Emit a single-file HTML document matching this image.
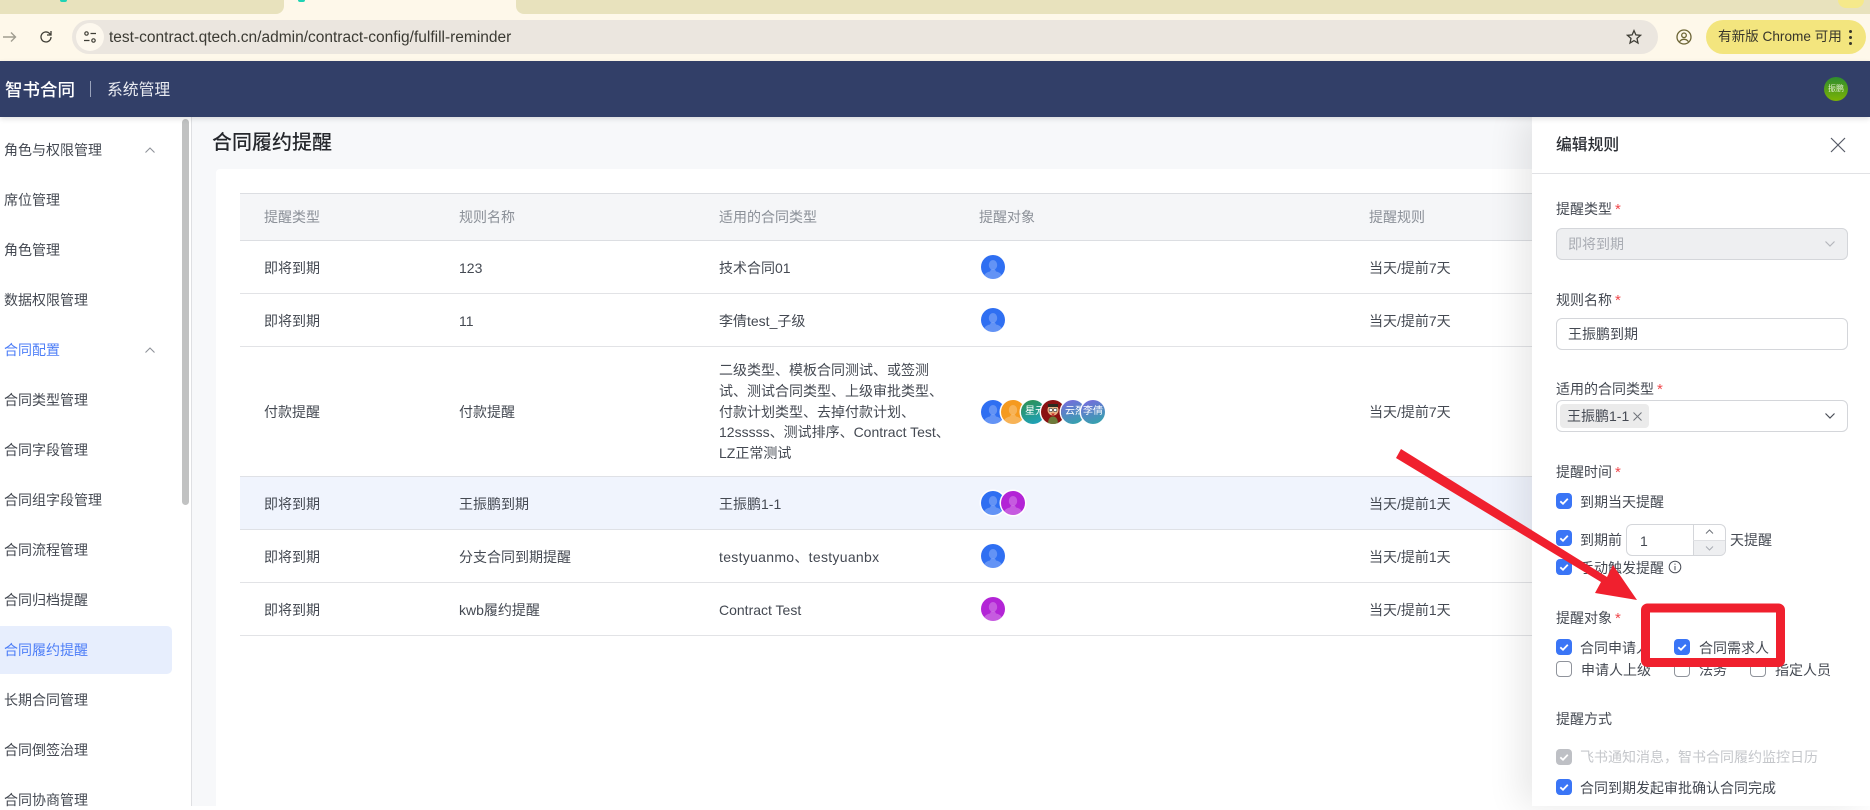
<!DOCTYPE html>
<html lang="zh"><head><meta charset="utf-8"><title>合同履约提醒</title>
<style>
*{box-sizing:border-box}
html,body{margin:0;padding:0}
body{position:relative;width:1870px;height:806px;overflow:hidden;background:#fff;font-family:"Liberation Sans","Noto Sans CJK SC",sans-serif;font-size:14px;color:#40454f}
.a{position:absolute}
.t{position:absolute;line-height:20px;height:20px;white-space:nowrap}
.m{color:#444952}
.h{color:#8b9098}
.red{color:#f0484c;font-size:15px;margin-left:3px}
.cb{position:absolute;width:16px;height:16px;border-radius:4px;background:#3a75f6}
.cb svg{position:absolute;left:0;top:0}
.cb.off{background:#fff;border:1px solid #8f939b}
.cb.dis{background:#bec0c5}
.av{position:absolute;width:24px;height:24px;border-radius:50%;overflow:hidden;box-shadow:0 0 0 1.5px #fff;color:#fff;font-size:11px;line-height:24px;text-align:center}
.av svg{position:absolute;left:0;top:0}
.line{position:absolute;left:240px;width:1292px;height:1px;background:#e2e3e6}
.p .t{margin-top:1px}
</style></head><body>

<!-- browser chrome -->
<div class="a" style="left:0;top:0;width:1870px;height:61px;background:#fef8ea"></div>
<div class="a" style="left:0;top:0;width:284px;height:14px;background:#e8e2bd;border-bottom-right-radius:8px"></div>
<div class="a" style="left:516px;top:0;width:1354px;height:14px;background:#e8e2bd;border-bottom-left-radius:8px"></div>
<div class="a" style="left:60px;top:0;width:7px;height:2px;background:#1fd3b5;border-radius:0 0 4px 4px"></div>
<div class="a" style="left:298px;top:0;width:7px;height:2px;background:#1fd3b5;border-radius:0 0 4px 4px"></div>
<div class="a" style="left:1838px;top:0;width:26px;height:8px;background:#f5e98b;border-radius:0 0 8px 8px"></div>
<svg class="a" style="left:2px;top:29px" width="16" height="16" viewBox="0 0 16 16" fill="none" stroke="#a09d90" stroke-width="1.4"><path d="M1 8h12M9 3.500 13.500 8 9 12.500"/></svg>
<svg class="a" style="left:38px;top:29px" width="16" height="16" viewBox="0 0 16 16" fill="none" stroke="#3f3e36" stroke-width="1.300"><path d="M13 8a5 5 0 1 1-1.600-3.700L13 6"/><path d="M13 2v4H9" /></svg>
<div class="a" style="left:72px;top:20px;width:1586px;height:34px;border-radius:17px;background:#ebe6df"></div>
<div class="a" style="left:76px;top:23px;width:28px;height:28px;border-radius:14px;background:#fdf8ee"></div>
<svg class="a" style="left:83px;top:30px" width="14" height="14" viewBox="0 0 14 14" fill="none" stroke="#3f3e36" stroke-width="1.200"><circle cx="3.500" cy="3.500" r="1.700"/><path d="M7.500 3.500H13M1 10.500h5.500"/><circle cx="10.500" cy="10.500" r="1.700"/></svg>
<div class="t" style="left:109px;top:28px;color:#3b3a33;font-size:15.500px">test-contract.qtech.cn/admin/contract-config/fulfill-reminder</div>
<svg class="a" style="left:1626px;top:29px" width="16" height="16" viewBox="0 0 16 16" fill="none" stroke="#3f3e36" stroke-width="1.300"><path d="M8 1.600 9.900 5.900 14.500 6.300 11 9.400 12 14 8 11.600 4 14 5 9.400 1.500 6.300 6.100 5.900Z"/></svg>
<svg class="a" style="left:1676px;top:29px" width="16" height="16" viewBox="0 0 16 16" fill="none" stroke="#6b6434" stroke-width="1.300"><circle cx="8" cy="8" r="7"/><circle cx="8" cy="6.300" r="2.300"/><path d="M3.600 12.600c1.200-1.700 2.700-2.300 4.400-2.300s3.200.6 4.400 2.300"/></svg>
<div class="a" style="left:1706px;top:20px;width:160px;height:34px;border-radius:17px;background:#f3e57e"></div>
<div class="t" style="left:1718px;top:27px;color:#37352a;font-size:13.600px">有新版 Chrome 可用</div>
<div class="a" style="left:1848.500px;top:30px;width:3px;height:3px;border-radius:50%;background:#37352a;box-shadow:0 6px 0 #37352a,0 12px 0 #37352a"></div>

<!-- app header -->
<div class="a" style="left:0;top:61px;width:1870px;height:56px;background:#323f68;box-shadow:0 2px 5px rgba(0,0,0,.12);z-index:6"></div>
<div class="t" style="left:5px;top:80px;color:#fff;font-size:17.500px;font-weight:500;z-index:7">智书合同</div>
<div class="a" style="left:90px;top:81px;width:1px;height:16px;background:#9aa3bb;z-index:7"></div>
<div class="t" style="left:107px;top:81px;color:#e9ebf1;font-size:15.800px;z-index:7">系统管理</div>
<div class="a" style="left:1824px;top:77px;width:24px;height:24px;border-radius:50%;background:linear-gradient(180deg,#2e8c2e,#7cb304);color:#dfeccf;font-size:8px;line-height:24px;text-align:center;z-index:7">振鹏</div>

<!-- sidebar -->
<div class="a" style="left:0;top:117px;width:192px;height:689px;background:#fff;border-right:1px solid #dfe0e3"></div>
<div class="a" style="left:182px;top:119px;width:7px;height:386px;border-radius:4px;background:#c1c2c2"></div>
<div class="a" style="left:0;top:626px;width:172px;height:48px;border-radius:0 5px 5px 0;background:#e7eefd"></div>
<div class="t m" style="left:4px;top:140px">角色与权限管理</div>
<svg class="a" style="left:144px;top:146px" width="12" height="8" viewBox="0 0 12 8" fill="none" stroke="#8e9299" stroke-width="1.100"><path d="M1.500 6.500 6 2l4.500 4.500"/></svg>
<div class="t m" style="left:4px;top:190px">席位管理</div>
<div class="t m" style="left:4px;top:240px">角色管理</div>
<div class="t m" style="left:4px;top:290px">数据权限管理</div>
<div class="t" style="left:4px;top:340px;color:#4d7ef7">合同配置</div>
<svg class="a" style="left:144px;top:346px" width="12" height="8" viewBox="0 0 12 8" fill="none" stroke="#8e9299" stroke-width="1.100"><path d="M1.500 6.500 6 2l4.500 4.500"/></svg>
<div class="t m" style="left:4px;top:390px">合同类型管理</div>
<div class="t m" style="left:4px;top:440px">合同字段管理</div>
<div class="t m" style="left:4px;top:490px">合同组字段管理</div>
<div class="t m" style="left:4px;top:540px">合同流程管理</div>
<div class="t m" style="left:4px;top:590px">合同归档提醒</div>
<div class="t" style="left:4px;top:640px;color:#4d7ef7">合同履约提醒</div>
<div class="t m" style="left:4px;top:690px">长期合同管理</div>
<div class="t m" style="left:4px;top:740px">合同倒签治理</div>
<div class="t m" style="left:4px;top:790px">合同协商管理</div>

<!-- main -->
<div class="a" style="left:192px;top:117px;width:1340px;height:689px;background:#f7f8fa"></div>
<div class="t" style="left:212px;top:133px;font-size:20px;font-weight:500;color:#26282d">合同履约提醒</div>
<div class="a" style="left:216px;top:169px;width:1316px;height:637px;background:#fff;border-radius:4px 0 0 0"></div>

<!-- table -->
<div class="a" style="left:240px;top:193px;width:1292px;height:48px;background:#f5f6f8;border-top:1px solid #dcdee2;border-bottom:1px solid #dcdee2"></div>
<div class="a" style="left:240px;top:476px;width:1292px;height:53px;background:#f0f4fd"></div>
<div class="line" style="top:293px"></div>
<div class="line" style="top:346px"></div>
<div class="line" style="top:476px;background:#dfe1e6"></div>
<div class="line" style="top:529px;background:#dfe1e6"></div>
<div class="line" style="top:582px"></div>
<div class="line" style="top:635px"></div>

<div class="t h" style="left:264px;top:207px">提醒类型</div>
<div class="t h" style="left:459px;top:207px">规则名称</div>
<div class="t h" style="left:719px;top:207px">适用的合同类型</div>
<div class="t h" style="left:979px;top:207px">提醒对象</div>
<div class="t h" style="left:1369px;top:207px">提醒规则</div>

<div class="t m" style="left:264px;top:258px">即将到期</div>
<div class="t m" style="left:459px;top:258px">123</div>
<div class="t m" style="left:719px;top:258px">技术合同01</div>
<div class="t m" style="left:1369px;top:258px">当天/提前7天</div>

<div class="t m" style="left:264px;top:311px">即将到期</div>
<div class="t m" style="left:459px;top:311px">11</div>
<div class="t m" style="left:719px;top:311px">李倩test_子级</div>
<div class="t m" style="left:1369px;top:311px">当天/提前7天</div>

<div class="t m" style="left:264px;top:402px">付款提醒</div>
<div class="t m" style="left:459px;top:402px">付款提醒</div>
<div class="a m" style="left:719px;top:360px;line-height:20.800px;white-space:nowrap">二级类型、模板合同测试、或签测<br>试、测试合同类型、上级审批类型、<br>付款计划类型、去掉付款计划、<br>12sssss、测试排序、Contract Test、<br>LZ正常测试</div>
<div class="t m" style="left:1369px;top:402px">当天/提前7天</div>

<div class="t m" style="left:264px;top:494px">即将到期</div>
<div class="t m" style="left:459px;top:494px">王振鹏到期</div>
<div class="t m" style="left:719px;top:494px">王振鹏1-1</div>
<div class="t m" style="left:1369px;top:494px">当天/提前1天</div>

<div class="t m" style="left:264px;top:547px">即将到期</div>
<div class="t m" style="left:459px;top:547px">分支合同到期提醒</div>
<div class="t m" style="left:719px;top:547px;letter-spacing:.3px">testyuanmo、testyuanbx</div>
<div class="t m" style="left:1369px;top:547px">当天/提前1天</div>

<div class="t m" style="left:264px;top:600px">即将到期</div>
<div class="t m" style="left:459px;top:600px">kwb履约提醒</div>
<div class="t m" style="left:719px;top:600px">Contract Test</div>
<div class="t m" style="left:1369px;top:600px">当天/提前1天</div>

<!-- avatars -->
<svg width="0" height="0" style="position:absolute"><defs><g id="p"><ellipse cx="12" cy="10" rx="4.200" ry="5" fill="#fff" fill-opacity=".25"/><path d="M2.500 24c0-4.500 2-6.500 6.500-7.500l1-2h4l1 2c4.500 1 6.500 3 6.500 7.500z" fill="#fff" fill-opacity=".25"/></g></defs></svg>
<div class="av" style="left:981px;top:255px;background:#2f6ff2"><svg width="24" height="24"><use href="#p"/></svg></div>
<div class="av" style="left:981px;top:308px;background:#2f6ff2"><svg width="24" height="24"><use href="#p"/></svg></div>

<div class="av" style="left:981px;top:400px;background:#2f6ff2"><svg width="24" height="24"><use href="#p"/></svg></div>
<div class="av" style="left:1001px;top:400px;background:#f59a1f"><svg width="24" height="24"><use href="#p"/></svg></div>
<div class="av" style="left:1021px;top:400px;background:linear-gradient(160deg,#2e8f4e,#1ea4c4);font-size:10px;text-align:left;text-indent:4px">星元</div>
<div class="av" style="left:1041px;top:400px;background:#8a1212"><svg width="24" height="24"><circle cx="12" cy="10" r="5.500" fill="#e8b184"/><rect x="7" y="4" width="10" height="3" fill="#2b2b20"/><circle cx="9.800" cy="10" r="1.700" fill="#fff" stroke="#333" stroke-width=".6"/><circle cx="14.200" cy="10" r="1.700" fill="#fff" stroke="#333" stroke-width=".6"/><path d="M10 13.500h4l-2 2z" fill="#c9201f"/><path d="M7 24c0-5 2-7.500 5-7.500s5 2.500 5 7.500z" fill="#6d7a3a"/></svg></div>
<div class="av" style="left:1061px;top:400px;background:linear-gradient(160deg,#7a68e0,#2ea8a8);font-size:10px;text-align:left;text-indent:4px">云烈</div>
<div class="av" style="left:1081px;top:400px;background:linear-gradient(160deg,#7a68e0,#2ea8a8);font-size:10px">李倩</div>

<div class="av" style="left:981px;top:491px;background:#2f6ff2"><svg width="24" height="24"><use href="#p"/></svg></div>
<div class="av" style="left:1001px;top:491px;background:#b324d6"><svg width="24" height="24"><use href="#p"/></svg></div>
<div class="av" style="left:981px;top:544px;background:#2f6ff2"><svg width="24" height="24"><use href="#p"/></svg></div>
<div class="av" style="left:981px;top:597px;background:#b324d6"><svg width="24" height="24"><use href="#p"/></svg></div>

<!-- panel -->
<div class="a" style="left:1532px;top:117px;width:338px;height:689px;background:#fff;box-shadow:-12px 0 32px rgba(0,0,0,.09);z-index:2"></div>
<div class="p" style="position:absolute;left:0;top:0;width:1870px;height:806px;z-index:3">
<div class="a" style="left:1532px;top:173px;width:338px;height:1px;background:#e1e2e5"></div>
<div class="t" style="left:1556px;top:135px;font-size:15.800px;font-weight:500;color:#2a2d33">编辑规则</div>
<svg class="a" style="left:1830px;top:137px" width="16" height="16" viewBox="0 0 16 16" fill="none" stroke="#565b66" stroke-width="1.200"><path d="M1 1l14 14M15 1 1 15"/></svg>

<div class="t m" style="left:1556px;top:198px">提醒类型<span class="red">*</span></div>
<div class="a" style="left:1556px;top:228px;width:292px;height:32px;border-radius:6px;background:#eeeff1;border:1px solid #d4d6da"></div>
<div class="t" style="left:1568px;top:233px;color:#a9acb3">即将到期</div>
<svg class="a" style="left:1824px;top:240px" width="12" height="8" viewBox="0 0 12 8" fill="none" stroke="#b4b7bc" stroke-width="1.200"><path d="M1.500 1.500 6 6l4.500-4.500"/></svg>

<div class="t m" style="left:1556px;top:289px">规则名称<span class="red">*</span></div>
<div class="a" style="left:1556px;top:318px;width:292px;height:32px;border-radius:6px;background:#fff;border:1px solid #d4d6da"></div>
<div class="t m" style="left:1568px;top:323px">王振鹏到期</div>

<div class="t m" style="left:1556px;top:378px">适用的合同类型<span class="red">*</span></div>
<div class="a" style="left:1556px;top:400px;width:292px;height:32px;border-radius:6px;background:#fff;border:1px solid #d4d6da"></div>
<div class="a" style="left:1560px;top:404px;width:89px;height:24px;border-radius:4px;background:#ebebeb"></div>
<div class="t m" style="left:1567px;top:405px">王振鹏1-1</div>
<svg class="a" style="left:1633px;top:412px" width="9" height="9" viewBox="0 0 9 9" fill="none" stroke="#6f737a" stroke-width="1"><path d="M.5.500l8 8M8.500.500l-8 8"/></svg>
<svg class="a" style="left:1824px;top:412px" width="12" height="8" viewBox="0 0 12 8" fill="none" stroke="#4a4e57" stroke-width="1.200"><path d="M1.500 1.500 6 6l4.500-4.500"/></svg>

<div class="t m" style="left:1556px;top:461px">提醒时间<span class="red">*</span></div>

<div class="cb" style="left:1556px;top:493px"><svg width="16" height="16" fill="none" stroke="#fff" stroke-width="1.800"><path d="M4.300 8.300 7 10.800l4.800-5"/></svg></div>
<div class="t m" style="left:1580px;top:491px">到期当天提醒</div>

<div class="cb" style="left:1556px;top:530px"><svg width="16" height="16" fill="none" stroke="#fff" stroke-width="1.800"><path d="M4.300 8.300 7 10.800l4.800-5"/></svg></div>
<div class="t m" style="left:1580px;top:529px">到期前</div>
<div class="a" style="left:1626px;top:524px;width:100px;height:32px;border-radius:6px;background:#fff;border:1px solid #d4d6da"></div>
<div class="a" style="left:1693px;top:540px;width:32px;height:15px;background:#eeeff1;border-radius:0 0 5px 0"></div>
<div class="a" style="left:1693px;top:525px;width:1px;height:30px;background:#d4d6da"></div>
<div class="a" style="left:1693px;top:540px;width:32px;height:1px;background:#dfe0e3"></div>
<svg class="a" style="left:1705px;top:529px" width="9" height="6" viewBox="0 0 9 6" fill="none" stroke="#6f737a" stroke-width="1"><path d="M1 4.500 4.500 1 8 4.500"/></svg>
<svg class="a" style="left:1705px;top:545px" width="9" height="6" viewBox="0 0 9 6" fill="none" stroke="#a9acb3" stroke-width="1"><path d="M1 1.500 4.500 5 8 1.500"/></svg>
<div class="t m" style="left:1640px;top:530px">1</div>
<div class="t m" style="left:1730px;top:529px">天提醒</div>

<div class="cb" style="left:1556px;top:559px"><svg width="16" height="16" fill="none" stroke="#fff" stroke-width="1.800"><path d="M4.300 8.300 7 10.800l4.800-5"/></svg></div>
<div class="t m" style="left:1580px;top:557px">手动触发提醒</div>
<svg class="a" style="left:1668px;top:560px" width="14" height="14" viewBox="0 0 14 14" fill="none" stroke="#4a4e57" stroke-width="1"><circle cx="7" cy="7" r="5.800"/><path d="M7 6v4.200M7 3.600v1.200"/></svg>

<div class="t m" style="left:1556px;top:607px">提醒对象<span class="red">*</span></div>

<div class="cb" style="left:1556px;top:639px"><svg width="16" height="16" fill="none" stroke="#fff" stroke-width="1.800"><path d="M4.300 8.300 7 10.800l4.800-5"/></svg></div>
<div class="t m" style="left:1580px;top:637px">合同申请人</div>
<div class="cb" style="left:1674px;top:639px"><svg width="16" height="16" fill="none" stroke="#fff" stroke-width="1.800"><path d="M4.300 8.300 7 10.800l4.800-5"/></svg></div>
<div class="t m" style="left:1699px;top:637px">合同需求人</div>

<div class="cb off" style="left:1556px;top:661px"></div>
<div class="t m" style="left:1581px;top:659px">申请人上级</div>
<div class="cb off" style="left:1674px;top:661px"></div>
<div class="t m" style="left:1699px;top:659px">法务</div>
<div class="cb off" style="left:1750px;top:661px"></div>
<div class="t m" style="left:1775px;top:659px">指定人员</div>

<div class="t m" style="left:1556px;top:708px">提醒方式</div>

<div class="cb dis" style="left:1556px;top:749px"><svg width="16" height="16" fill="none" stroke="#fff" stroke-width="1.800"><path d="M4.300 8.300 7 10.800l4.800-5"/></svg></div>
<div class="t" style="left:1580px;top:746px;color:#c5c7cb">飞书通知消息，智书合同履约监控日历</div>
<div class="cb" style="left:1556px;top:779px"><svg width="16" height="16" fill="none" stroke="#fff" stroke-width="1.800"><path d="M4.300 8.300 7 10.800l4.800-5"/></svg></div>
<div class="t m" style="left:1580px;top:777px">合同到期发起审批确认合同完成</div>
</div>

<!-- red annotations -->
<svg class="a" style="left:0;top:0;z-index:5" width="1870" height="806">
<polygon points="1401,449 1607,577 1613,565 1637,600 1595,593 1601,582 1396,458" fill="#f0202e"/>
<rect x="1645.500" y="608" width="135" height="54.500" rx="2" fill="none" stroke="#f0202e" stroke-width="9"/>
</svg>
</body></html>
